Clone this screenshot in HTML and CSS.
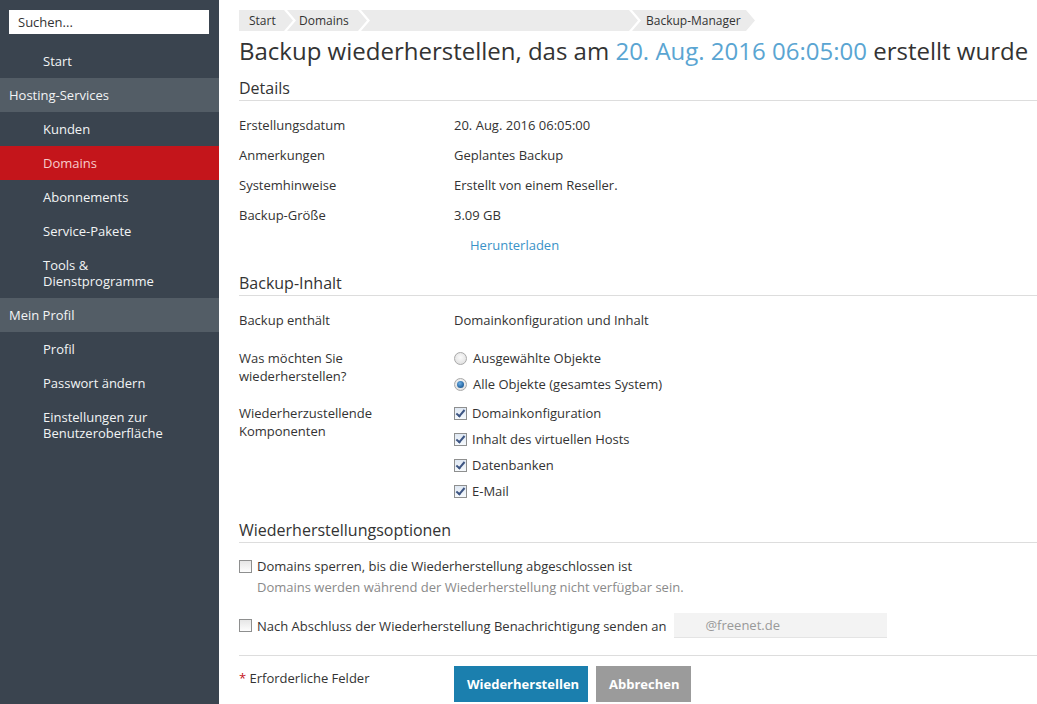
FILE: index.html
```html
<!DOCTYPE html>
<html lang="de">
<head>
<meta charset="utf-8">
<title>Backup wiederherstellen</title>
<link rel="stylesheet" href="styles.css">
</head>
<body>
<div class="page">
  <aside class="sidebar">
    <div class="search"><input class="search-input" type="text" placeholder="Suchen..."></div>
    <nav class="nav">
      <a class="nav-item">Start</a>
      <div class="nav-head">Hosting-Services</div>
      <a class="nav-item">Kunden</a>
      <a class="nav-item active">Domains</a>
      <a class="nav-item">Abonnements</a>
      <a class="nav-item">Service-Pakete</a>
      <a class="nav-item two">Tools &amp;<br>Dienstprogramme</a>
      <div class="nav-head">Mein Profil</div>
      <a class="nav-item">Profil</a>
      <a class="nav-item">Passwort ändern</a>
      <a class="nav-item two">Einstellungen zur<br>Benutzeroberfläche</a>
    </nav>
  </aside>

  <main class="main">
    <div class="crumbs">
      <span class="crumb first c-start">Start</span>
      <span class="crumb c-domains">Domains</span>
      <span class="crumb c-blank"></span>
      <span class="crumb c-bm">Backup-Manager</span>
    </div>

    <h1 class="title">Backup wiederherstellen, das am <span class="date">20. Aug. 2016 06:05:00</span> erstellt wurde</h1>

    <h2 class="section section-details">Details</h2>
    <div class="details">
      <div class="drow"><span>Erstellungsdatum</span><span>20. Aug. 2016 06:05:00</span></div>
      <div class="drow"><span>Anmerkungen</span><span>Geplantes Backup</span></div>
      <div class="drow"><span>Systemhinweise</span><span>Erstellt von einem Reseller.</span></div>
      <div class="drow"><span>Backup-Größe</span><span>3.09 GB</span></div>
      <div class="drow"><span></span><a class="link">Herunterladen</a></div>
    </div>

    <h2 class="section section-content">Backup-Inhalt</h2>
    <div class="frow r1"><span>Backup enthält</span><span>Domainkonfiguration und Inhalt</span></div>
    <div class="frow r2">
      <span>Was möchten Sie<br>wiederherstellen?</span>
      <div class="opts">
        <div class="opt"><span class="radio"></span>Ausgewählte Objekte</div>
        <div class="opt"><span class="radio on"></span>Alle Objekte (gesamtes System)</div>
      </div>
    </div>
    <div class="frow r3">
      <span>Wiederherzustellende<br>Komponenten</span>
      <div class="opts">
        <div class="opt"><span class="cb on"></span>Domainkonfiguration</div>
        <div class="opt"><span class="cb on"></span>Inhalt des virtuellen Hosts</div>
        <div class="opt"><span class="cb on"></span>Datenbanken</div>
        <div class="opt"><span class="cb on"></span>E-Mail</div>
      </div>
    </div>

    <h2 class="section section-opts">Wiederherstellungsoptionen</h2>
    <div class="option o1">
      <div class="opt"><span class="cb"></span>Domains sperren, bis die Wiederherstellung abgeschlossen ist</div>
      <div class="hint">Domains werden während der Wiederherstellung nicht verfügbar sein.</div>
    </div>
    <div class="option o2">
      <div class="opt"><span class="cb"></span>Nach Abschluss der Wiederherstellung Benachrichtigung senden an</div>
      <div class="email">@freenet.de</div>
    </div>

    <div class="footer">
      <div class="req"><span class="star">*</span> Erforderliche Felder</div>
      <div class="buttons">
        <button class="btn primary">Wiederherstellen</button>
        <button class="btn secondary">Abbrechen</button>
      </div>
    </div>
  </main>
</div>
</body>
</html>
```

FILE: styles.css
```css
* { box-sizing: border-box; }

html, body {
  margin: 0;
  padding: 0;
  height: 100%;
}

body {
  font-family: "Open Sans", "Liberation Sans", sans-serif;
  font-size: 13px;
  color: #333;
  background: #fff;
}

.page {
  display: flex;
  min-height: 704px;
}

/* Sidebar */
.sidebar {
  width: 219px;
  flex: 0 0 219px;
  background: #3a444f;
  color: #fff;
}

.search {
  padding: 10px 10px 10px 9px;
}

.search-input {
  display: block;
  width: 200px;
  height: 24px;
  border: 0;
  padding: 0 9px;
  font-family: inherit;
  font-size: 13px;
  color: #333;
  background: #fff;
  outline: none;
}
.search-input::placeholder { color: #333; }

.nav { display: flex; flex-direction: column; }

.nav-item {
  display: block;
  padding: 8px 10px 8px 43px;
  line-height: 18px;
  color: #f2f4f5;
}
.nav-item.two { line-height: 16px; padding-top: 9px; padding-bottom: 9px; }
.nav-item.active { background: #c4151b; color: #f7cccc; }

.nav-head {
  background: #535d66;
  padding: 8px 9px;
  line-height: 18px;
  color: #f2f4f5;
}

/* Main */
.main {
  flex: 1;
  padding: 10px 0 0 20px;
}

.crumbs {
  display: flex;
  height: 21px;
  line-height: 21px;
  font-size: 12px;
  color: #333;
}
.crumb {
  display: block;
  flex: 0 0 auto;
  height: 21px;
  white-space: nowrap;
  background: #ebebeb;
  padding: 0 17px 0 12px;
  margin-left: -6px;
  clip-path: polygon(0 0, calc(100% - 9px) 0, 100% 50%, calc(100% - 9px) 100%, 0 100%, 9px 50%);
}
.crumb.first {
  margin-left: 0;
  padding-left: 10px;
  clip-path: polygon(0 0, calc(100% - 9px) 0, 100% 50%, calc(100% - 9px) 100%, 0 100%);
}
.c-start { width: 54px; }
.c-domains { width: 80px; }
.c-blank { width: 277px; }
.c-bm { width: 123px; padding-left: 14px; padding-right: 8px; }

.title {
  margin: 4px 0 0 0;
  font-size: 24px;
  font-weight: 400;
  line-height: 32px;
  color: #333;
  white-space: nowrap;
}
.date { color: #5aa5d2; }

.section {
  margin: 0;
  font-size: 16px;
  font-weight: 400;
  line-height: 22px;
  color: #333;
  border-bottom: 1px solid #ddd;
  padding-bottom: 1px;
}
.section-details { margin-top: 10px; }
.section-content { margin-top: 12px; }
.section-opts { margin-top: 19px; }

.details { padding-top: 9px; }
.drow {
  display: grid;
  grid-template-columns: 215px 1fr;
  height: 30px;
  line-height: 30px;
}
.link { color: #3a92c8; padding-left: 16px; }

.frow {
  display: grid;
  grid-template-columns: 215px 1fr;
  line-height: 18px;
}
.r1 { margin-top: 15px; }
.r2 { margin-top: 20px; }
.r3 { margin-top: 11px; }

.opts { display: flex; flex-direction: column; gap: 8px; }

.opt {
  display: flex;
  align-items: center;
  line-height: 18px;
  white-space: nowrap;
}

.radio {
  width: 13px;
  height: 13px;
  border-radius: 50%;
  border: 1px solid #a9a9a9;
  background: radial-gradient(circle at 50% 40%, #fafafa 0%, #e4e4e4 70%, #d4d4d4 100%);
  margin-right: 6px;
  flex: 0 0 13px;
  position: relative;
}
.radio.on::after {
  content: "";
  position: absolute;
  left: 2px;
  top: 2px;
  width: 7px;
  height: 7px;
  border-radius: 50%;
  background: radial-gradient(circle at 40% 35%, #6fb0e6 0%, #2a6aa6 60%, #1d4f80 100%);
}

.cb {
  width: 13px;
  height: 13px;
  border: 1px solid #8e8f8f;
  background: linear-gradient(#e6e6e6, #fdfdfd);
  margin-right: 5px;
  flex: 0 0 13px;
  position: relative;
}
.cb.on {
  background: linear-gradient(#dfe8f3, #f6f9fc);
}
.cb.on::after {
  content: "";
  position: absolute;
  left: 3px;
  top: 0px;
  width: 3px;
  height: 7px;
  border-right: 2px solid #3d5583;
  border-bottom: 2px solid #3d5583;
  transform: rotate(40deg);
}

.option.o1 { margin-top: 14px; }
.hint { color: #8a8a8a; padding-left: 18px; margin-top: 3px; line-height: 18px; }

.option.o2 {
  margin-top: 17px;
  display: flex;
  align-items: center;
}
.email {
  margin-left: 8px;
  width: 213px;
  height: 25px;
  line-height: 25px;
  background: #f3f3f3;
  border-bottom: 1px solid #e4e4e4;
  color: #999;
  padding-left: 31px;
}

.footer {
  margin-top: 17px;
  border-top: 1px solid #ddd;
  padding-top: 10px;
  display: flex;
}
.req {
  width: 215px;
  line-height: 24px;
}
.star { color: #c4151b; }

.buttons { display: flex; gap: 8px; }
.btn {
  height: 36px;
  border: 0;
  font-family: inherit;
  font-size: 13px;
  font-weight: 700;
  color: #fff;
  padding: 0 13px;
}
.btn.primary { background: #1b7fae; width: 134px; }
.btn.secondary { background: #9b9b9b; width: 95px; }
```
